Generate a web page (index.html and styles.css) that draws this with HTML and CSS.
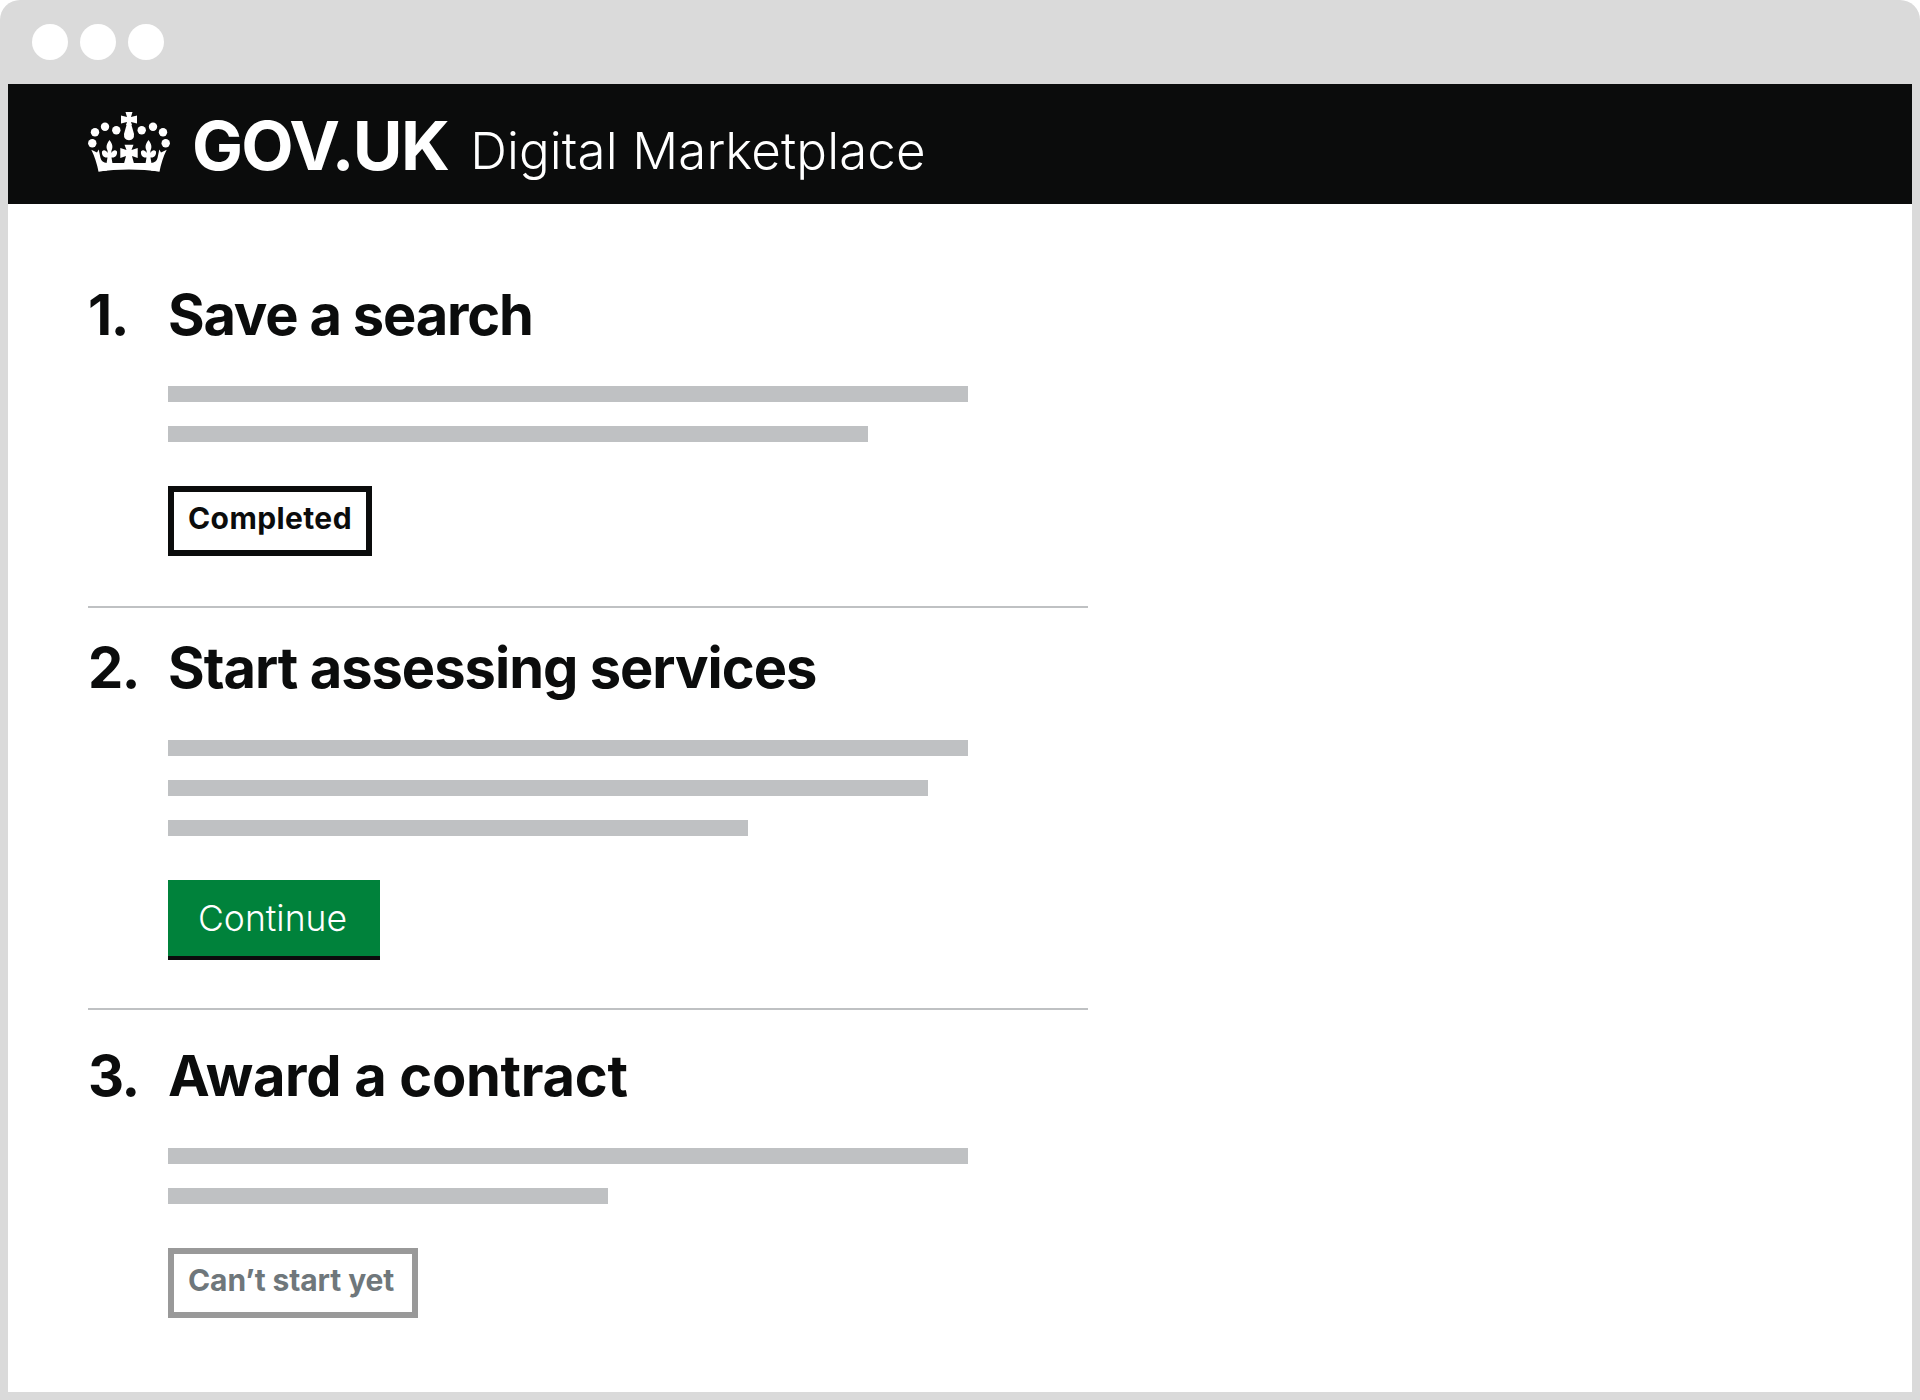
FILE: index.html
```html
<!DOCTYPE html>
<html lang="en">
<head>
<meta charset="utf-8">
<title>Digital Marketplace</title>
<link rel="stylesheet" href="styles.css">
</head>
<body>
<div class="window">
  <div class="titlebar"><span class="dot"></span><span class="dot"></span><span class="dot"></span></div>
  <header class="masthead">
    <svg class="crown" viewBox="0 0 82 60" aria-hidden="true">
      <defs>
        <g id="crown-half">
          <circle cx="4.3" cy="31.3" r="4.2"/>
          <circle cx="7" cy="20.3" r="4.2"/>
          <circle cx="17" cy="14.7" r="4.2"/>
          <circle cx="28.3" cy="18.3" r="4.2"/>
          <path d="M3.300 37.700 L9 40.500 L10.700 37.500 L12.500 46 Q13.500 50.500 19 51 L19 58.500 L10.500 59.500 Q8 47 3.300 37.700Z"/>
          <path d="M10.500 59.500 L13 51 L41 51 L41 57.600 Q25 57.800 10.500 59.500Z"/>
          <path d="M21.500 28 C24 31.500 25.500 34.500 23.500 38.500 L23.300 41 C25 38 27.500 37.500 29 39.500 C29.500 43 27.500 46 23.500 45.500 L24.500 51.500 H18.500 L19.500 45.500 C15.500 46 13.500 43 14 39.500 C15.500 37.500 18 38 19.700 41 L19.500 38.500 C17.500 34.500 19 31.500 21.500 28Z"/>
        </g>
        <g id="crown-all" fill="#fff">
          <use href="#crown-half"/>
          <use href="#crown-half" transform="matrix(-1 0 0 1 82 0)"/>
          <path d="M37.500 0 H44.500 L43 5 L49 3.500 V11.500 L43 10 L44 13 H38 L39 10 L33 11.500 V3.500 L39 5Z"/>
          <path d="M38.500 13 H43.500 L46 22 Q46.500 28 41 28.300 Q35.500 28 36 22Z"/>
          <path d="M36.500 32.700 H45.500 L43.500 38 L49.700 36 V46 L44 44 L46 51.500 H36 L38 44 L32.300 46 V36 L38.500 38Z"/>
        </g>
      </defs>
      <use href="#crown-all"/>
    </svg>
    <span class="wordmark">GOV.UK</span>
    <span class="service">Digital Marketplace</span>
  </header>
  <main class="content">
    <section class="step">
      <h2 class="step-title title-a"><span class="step-num">1.</span>Save a search</h2>
      <div class="step-body">
        <div class="lines"><div class="line w800"></div><div class="line w700"></div></div>
        <div class="tag">Completed</div>
      </div>
    </section>
    <section class="step">
      <h2 class="step-title title-b"><span class="step-num">2.</span>Start assessing services</h2>
      <div class="step-body">
        <div class="lines"><div class="line w800"></div><div class="line w760"></div><div class="line w580"></div></div>
        <div class="button">Continue</div>
      </div>
    </section>
    <section class="step step-last">
      <h2 class="step-title title-c"><span class="step-num">3.</span>Award a contract</h2>
      <div class="step-body">
        <div class="lines"><div class="line w800"></div><div class="line w440"></div></div>
        <div class="tag tag-muted">Can’t start yet</div>
      </div>
    </section>
  </main>
</div>
</body>
</html>
```
FILE: styles.css
```css
* { box-sizing: border-box; }
html, body { margin: 0; padding: 0; background: #fff; height: 1400px; overflow: hidden; }
body { font-family: Inter, "Noto Sans", "Liberation Sans", sans-serif; color: #0b0c0c; }

.window {
  width: 1920px;
  height: 1400px;
  background: #dadada;
  border-radius: 20px 20px 0 0;
  padding: 0 8px 8px;
  display: flex;
  flex-direction: column;
}
.titlebar {
  height: 84px;
  flex: none;
  display: flex;
  align-items: center;
  gap: 12px;
  padding-left: 24px;
}
.dot { width: 36px; height: 36px; border-radius: 50%; background: #fff; }

.masthead {
  height: 120px;
  flex: none;
  background: #0b0c0c;
  color: #fff;
  display: flex;
  align-items: flex-start;
  padding: 28px 0 0 80px;
}
.crown { width: 82px; height: 60px; display: block; }
.wordmark {
  font-weight: 700;
  font-size: 68px;
  line-height: 70px;
  margin: -2px 0 0 22px;
  letter-spacing: -1.7px;
}
.service {
  font-weight: 300;
  font-size: 51px;
  line-height: 70px;
  margin: 4px 0 0 22px;
  letter-spacing: 0.13px;
}

.content {
  flex: 1;
  background: #fff;
  padding: 50px 0 0 80px;
}
.step {
  width: 1000px;
  padding: 32px 0 48px;
  border-bottom: 2px solid #bfc1c3;
}
.step:first-child { padding: 33px 0 50px; }
.step-last { border-bottom: 0; padding: 38px 0 0; }
.step-title {
  margin: 0 0 44px;
  display: flex;
  font-size: 56px;
  line-height: 56px;
  font-weight: 700;
}
.title-a { letter-spacing: -1.2px; margin-bottom: 43px; }
.title-b { letter-spacing: -1px; }
.title-c { letter-spacing: -0.3px; }
.step-num { width: 80px; flex: none; letter-spacing: -1.5px; }
.step-body { margin-left: 80px; }
.lines { display: flex; flex-direction: column; gap: 24px; margin-bottom: 44px; }
.line { height: 16px; background: #bfc1c3; }
.w800 { width: 800px; }
.w760 { width: 760px; }
.w700 { width: 700px; }
.w580 { width: 580px; }
.w440 { width: 440px; }

.tag {
  width: fit-content;
  height: 70px;
  border: 6px solid #0b0c0c;
  padding: 0 14px;
  font-weight: 700;
  font-size: 30px;
  line-height: 53px;
  letter-spacing: 0.4px;
}
.tag-muted {
  border-color: #999;
  color: #6f777b;
  padding: 0 18px 0 14px;
  letter-spacing: -0.1px;
}
.button {
  width: fit-content;
  height: 80px;
  background: #00823b;
  border-bottom: 4px solid #0b0c0c;
  color: #fff;
  padding: 0 33px 0 30px;
  font-size: 35.5px;
  font-weight: 350;
  line-height: 77px;
}
```
